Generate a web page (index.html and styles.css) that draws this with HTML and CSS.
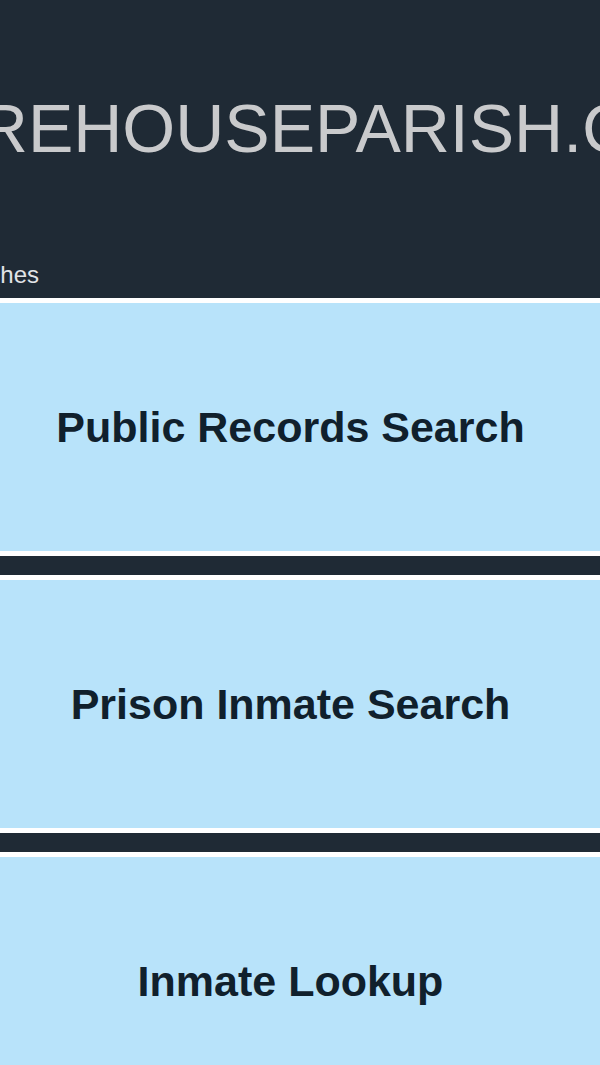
FILE: index.html
```html
<!DOCTYPE html>
<html>
<head>
<meta charset="utf-8">
<link rel="stylesheet" href="styles.css">
</head>
<body>
<header class="site-header">
  <div class="title-row"><h1 class="site-title">MOREHOUSEPARISH.COM</h1></div>
  <div class="tagline-row"><span class="tagline">Public Records Searches</span></div>
</header>
<main class="cards">
  <a class="card" href="#"><span class="card-label">Public Records Search</span></a>
  <a class="card" href="#"><span class="card-label">Prison Inmate Search</span></a>
  <a class="card" href="#"><span class="card-label">Inmate Lookup</span></a>
</main>
</body>
</html>
```
FILE: styles.css
```css
html, body {
  margin: 0;
  padding: 0;
}
body {
  background: #1f2a35;
  font-family: "Liberation Sans", Arial, sans-serif;
  overflow: hidden;
  height: 1065px;
}
.site-header {
  height: 298px;
  background: #1f2a35;
  display: flex;
  flex-direction: column;
}
.title-row {
  display: flex;
  justify-content: center;
  padding-top: 83px;
  padding-left: 10px;
  height: 90px;
}
.site-title {
  margin: 0;
  font-weight: normal;
  font-size: 68px;
  line-height: 90px;
  color: #c9cacc;
  white-space: nowrap;
  flex-shrink: 0;
}
.tagline-row {
  display: flex;
  justify-content: flex-end;
  width: 39px;
  margin-top: 87px;
}
.tagline {
  font-size: 24px;
  line-height: 30px;
  color: #e1e4e7;
  white-space: nowrap;
  flex-shrink: 0;
}
.cards {
  display: flex;
  flex-direction: column;
  gap: 19px;
}
.card {
  display: flex;
  align-items: center;
  justify-content: center;
  height: 248px;
  padding-right: 19px;
  background: #b8e3fa;
  border-top: 5px solid #ffffff;
  border-bottom: 5px solid #ffffff;
  text-decoration: none;
}
.card-label {
  font-size: 43px;
  font-weight: bold;
  color: #10202c;
}
```
